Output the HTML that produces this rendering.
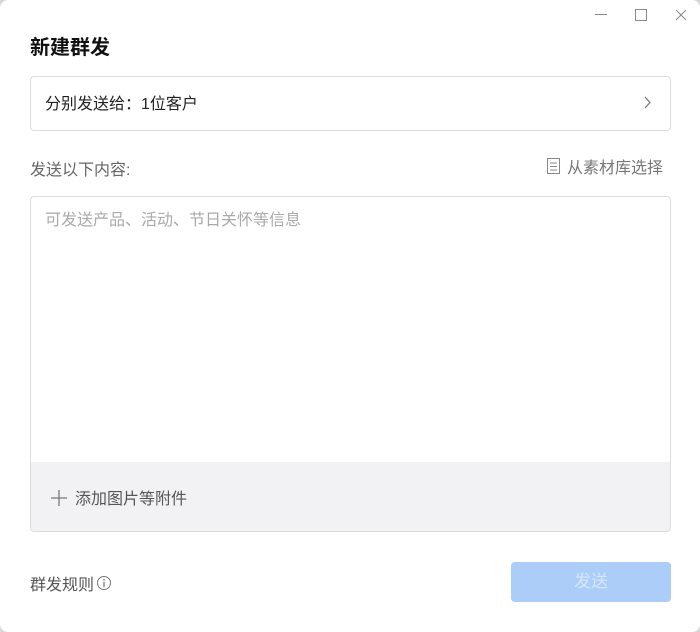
<!DOCTYPE html>
<html><head><meta charset="utf-8"><style>
*{margin:0;padding:0;box-sizing:border-box}
html,body{width:700px;height:632px;overflow:hidden;background:#d8d8d8}
body{font-family:"Liberation Sans","Noto Sans CJK SC",sans-serif;position:relative}
.win{position:absolute;left:0;top:0;width:700px;height:632px;background:#fff;border-radius:8px}
.abs{position:absolute}
</style></head><body><div class="win">
<svg class="abs" style="left:590px;top:5px" width="105" height="20">
<line x1="5" y1="9.5" x2="17" y2="9.5" stroke="#888" stroke-width="1"/>
<rect x="45.5" y="4.5" width="11" height="11" fill="none" stroke="#888" stroke-width="1"/>
<path d="M86 5L96 15M96 5L86 15" stroke="#888" stroke-width="1"/>
</svg>
<div class="abs" style="left:30px;top:31px;font-size:20px;font-weight:bold;color:#111">新建群发</div>
<div class="abs" style="left:30px;top:76px;width:641px;height:55px;border:1px solid #dcdcdc;border-radius:4px"></div>
<div class="abs" style="left:45px;top:90px;font-size:16px;color:#222">分别发送给：1位客户</div>
<svg class="abs" style="left:642px;top:95px" width="12" height="16"><path d="M3 2L8 7.5L3 13" fill="none" stroke="#777" stroke-width="1.3"/></svg>
<div class="abs" style="left:30px;top:156px;font-size:16px;color:#666">发送以下内容:</div>
<svg class="abs" style="left:546px;top:157px" width="16" height="18"><rect x="1.5" y="1.5" width="12" height="15" fill="none" stroke="#888"/><path d="M4 6h7M4 9.5h7M4 13h7" stroke="#888"/></svg>
<div class="abs" style="left:567px;top:154px;font-size:16px;color:#777">从素材库选择</div>
<div class="abs" style="left:30px;top:196px;width:641px;height:336px;border:1px solid #dcdcdc;border-radius:4px;overflow:hidden">
<div class="abs" style="left:0;top:265px;width:100%;height:70px;background:#f2f2f4"></div>
</div>
<div class="abs" style="left:45px;top:206px;font-size:16px;color:#aaa">可发送产品、活动、节日关怀等信息</div>
<svg class="abs" style="left:50px;top:489px" width="18" height="18"><path d="M9 1v16M1 9h16" stroke="#777" stroke-width="1.3"/></svg>
<div class="abs" style="left:75px;top:485px;font-size:16px;color:#555">添加图片等附件</div>
<div class="abs" style="left:30px;top:571px;font-size:16px;color:#555">群发规则</div>
<svg class="abs" style="left:96px;top:575px" width="16" height="16"><circle cx="8" cy="8" r="6.5" fill="none" stroke="#777"/><path d="M8 7v5" stroke="#777" stroke-width="1.3"/><circle cx="8" cy="4.8" r="0.9" fill="#777"/></svg>
<div class="abs" style="left:511px;top:562px;width:160px;height:40px;background:#abcdf8;border-radius:4px;color:#d6e7fc;font-size:17px;text-align:center;line-height:40px">发送</div>
</div></body></html>
